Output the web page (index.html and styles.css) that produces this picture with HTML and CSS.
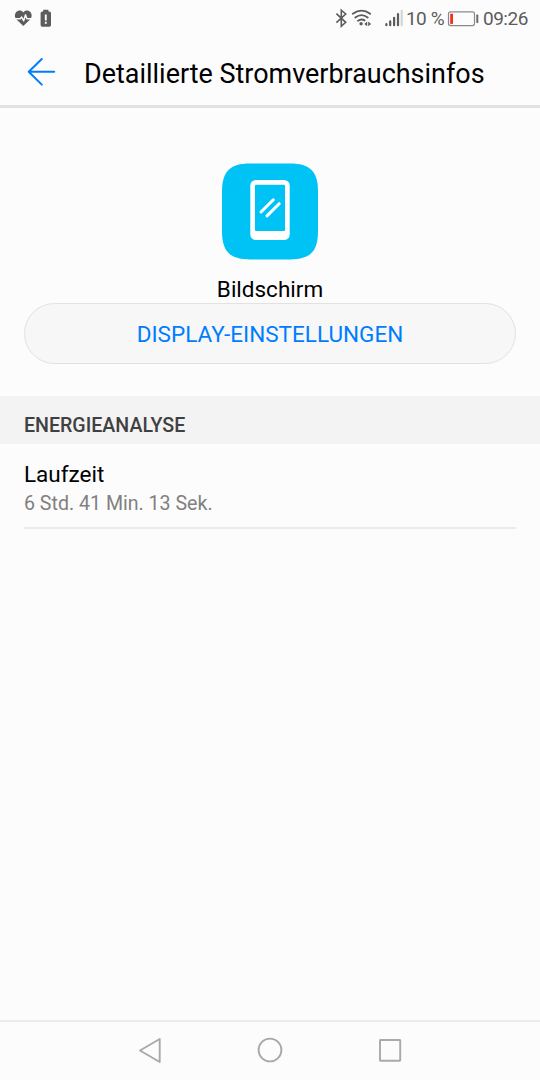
FILE: index.html
```html
<!DOCTYPE html>
<html lang="de">
<head>
<meta charset="utf-8">
<title>Detaillierte Stromverbrauchsinfos</title>
<link rel="stylesheet" href="styles.css">
</head>
<body>
<div class="status">
  <svg class="status-left" width="60" height="36" viewBox="0 0 60 36">
    <path fill="#5c5c5c" d="M23.3 26 16.5 19.5C14.2 17 14.5 13.5 16.8 11.6c2-1.7 5-1.3 6.5.9 1.5-2.2 4.5-2.6 6.5-.9 2.3 1.9 2.6 5.4.3 7.9z"/>
    <path fill="none" stroke="#fcfcfc" stroke-width="1.4" stroke-linejoin="round" d="M14 18.7h6.2l1.5-1.6 2 3.7 1.8-6 1.4 3.9H33"/>
    <path fill="#5c5c5c" d="M43.2 9.8h5.2v1.7h1a1.6 1.6 0 0 1 1.6 1.6v12a1.6 1.6 0 0 1-1.6 1.6h-7.2a1.6 1.6 0 0 1-1.6-1.6v-12a1.6 1.6 0 0 1 1.6-1.6h1z"/>
    <path stroke="#fcfcfc" stroke-width="1.9" d="M45.8 14.6v5.8M45.8 21.8v2"/>
  </svg>
  <div class="status-right">
    <svg width="71" height="36" viewBox="335 0 71 36">
      <g fill="none" stroke="#5c5c5c" stroke-width="1.6">
        <path d="m336.4 13.7 9.3 8.6-4.4 4V10.2l4.4 3.8-9.3 8.6"/>
        <path stroke-width="1.9" stroke-linecap="round" d="M352.8 13.7q8.8-6.2 17.4 0M355.3 17.4q6.2-4.6 12.4 0M358 20.8q3.5-2.5 6.5-.4"/>
      </g>
      <circle cx="361.1" cy="23.8" r="1.7" fill="#5c5c5c"/>
      <path fill="#5c5c5c" d="m367.2 21.5v4.8l-2.9-2.4zM368.2 21.5v4.8l2.9-2.4z"/>
      <path stroke="#5c5c5c" stroke-width="2.2" stroke-linecap="round" d="M386.4 24.2v1M390.2 21.3v3.9M394.1 17.8v7.4M398 14v11.2"/>
      <path stroke="#d4d4d4" stroke-width="2.2" stroke-linecap="round" d="M401.7 10.8v14.4"/>
    </svg>
    <span class="percent">10 %</span>
    <svg class="battery" width="32" height="36" viewBox="447 0 32 36">
      <rect x="448.5" y="11.9" width="26" height="13.7" rx="2" fill="none" stroke="#8a8a8a" stroke-width="1.2"/>
      <path fill="#f3301c" d="M450.2 13.7h2.8v10.2h-2.8z"/>
      <rect x="476.3" y="14.6" width="2" height="8.5" rx=".6" fill="#6c6c6c"/>
    </svg>
    <span class="clock">09:26</span>
  </div>
</div>
<header class="header">
  <svg class="back" width="30" height="30" viewBox="27 57 30 30" fill="none" stroke="#007dff" stroke-width="2" stroke-linecap="round" stroke-linejoin="round"><path d="M54.2 71.8H28.7M41.8 59 28.7 71.8 41.8 84.6"/></svg>
  <h1 class="title">Detaillierte Stromverbrauchsinfos</h1>
</header>
<main class="content">
  <section class="app">
    <svg width="96" height="97" viewBox="0 -.4 96 97">
      <path fill="#00c3f5" d="M28 0H68C88 0 96 8 96 28V68C96 88 88 96 68 96H28C8 96 0 88 0 68V28C0 8 8 0 28 0Z"/>
      <path fill="#fff" fill-rule="evenodd" d="M34 16.5H62a5.7 5.7 0 0 1 5.7 5.7V71a5.7 5.7 0 0 1-5.7 5.7H34a5.7 5.7 0 0 1-5.7-5.7V22.2a5.7 5.7 0 0 1 5.7-5.7zM34 21.3a1 1 0 0 0-1 1V66.5a1 1 0 0 0 1 1H62a1 1 0 0 0 1-1V22.3a1 1 0 0 0-1-1z"/>
      <path stroke="#fff" stroke-width="3" stroke-linecap="round" d="M39 48.6 51.3 36.4M45 52.5 57.2 40.3"/>
    </svg>
    <div class="app-name">Bildschirm</div>
  </section>
  <button class="settings">DISPLAY-EINSTELLUNGEN</button>
  <h2 class="section">ENERGIEANALYSE</h2>
  <div class="row">
    <div class="row-title">Laufzeit</div>
    <div class="row-value">6 Std. 41 Min. 13 Sek.</div>
  </div>
</main>
<nav class="nav">
  <svg width="540" height="58" viewBox="0 1022 540 58" fill="none" stroke="#a9a9a9" stroke-width="1.9" stroke-linejoin="round">
    <path d="M140 1050.5 159.7 1039V1062z"/>
    <circle cx="270" cy="1050" r="11.4"/>
    <rect x="380" y="1040" width="20.2" height="20.8" rx=".5"/>
  </svg>
</nav>
</body>
</html>
```
FILE: styles.css
```css
* { box-sizing: border-box; }
body {
  margin: 0;
  height: 1080px;
  display: flex;
  flex-direction: column;
  overflow: hidden;
  background: #fcfcfc;
  color: #000;
  font-family: Roboto, "Liberation Sans", sans-serif;
}
svg { display: block; flex: none; }
.status {
  height: 36px;
  display: flex;
  justify-content: space-between;
  color: #5c5c5c;
  font-size: 19px;
  line-height: 38px;
  white-space: nowrap;
}
.status-right { display: flex; width: 205px; }
.percent { width: 41px; letter-spacing: -0.8px; word-spacing: 1px; }
.clock { margin-left: 4px; letter-spacing: -0.5px; }
.header {
  height: 72px;
  display: flex;
  padding: 21px 0 0 27px;
  border-bottom: 3px solid #e2e2e2;
}
.title {
  margin: 0 0 0 27px;
  font-size: 26.95px;
  font-weight: 400;
  line-height: 34px;
  white-space: nowrap;
}
.content { flex: 1; }
.app {
  height: 195px;
  padding-top: 55px;
  display: flex;
  flex-direction: column;
  align-items: center;
}
.app-name { margin-top: 15px; font-size: 22.5px; line-height: 28px; }
.settings {
  display: block;
  width: 492px;
  height: 61px;
  margin: 0 24px;
  padding: 2px 0 0;
  border: 1.5px solid #e2e2e2;
  border-radius: 31px;
  background: #f7f7f7;
  color: #007dff;
  font: 22.5px/57px Roboto, "Liberation Sans", sans-serif;
}
.section {
  height: 47.5px;
  margin: 32px 0 0;
  padding-left: 24px;
  background: #f3f3f3;
  color: #404040;
  font-size: 19.6px;
  font-weight: 500;
  line-height: 60px;
}
.row {
  height: 85px;
  margin: 0 24px;
  padding-top: 15px;
  border-bottom: 2px solid #ebebeb;
}
.row-title { font-size: 22.5px; line-height: 30px; }
.row-value { color: #808080; font-size: 19.6px; line-height: 29px; }
.nav { height: 60px; border-top: 2px solid #ebebeb; }
```
